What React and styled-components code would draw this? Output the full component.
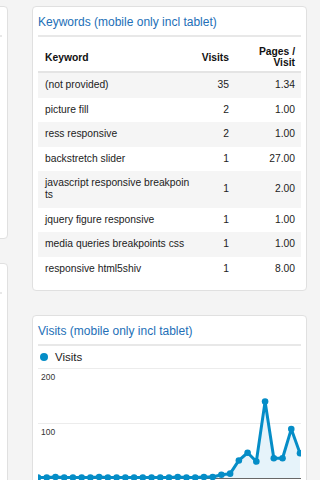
import React from "react";
import styled, { createGlobalStyle } from "styled-components";

const GlobalStyle = createGlobalStyle`
  html, body {
    margin: 0;
    padding: 0;
    overflow: hidden;
    background: #f4f4f4;
  }
  body {
    font-family: "Liberation Sans", Arial, Helvetica, sans-serif;
    color: #333;
  }
`;

const Page = styled.div`
  display: flex;
  gap: 24px;
  padding-top: 6px;
  margin-left: -252px;
`;

const Column = styled.div`
  display: flex;
  flex-direction: column;
  gap: ${(props) => props.gap}px;
  width: ${(props) => props.width}px;
  flex-shrink: 0;
`;

const Card = styled.section`
  background: #fff;
  border: 1px solid #e0e0e0;
  border-radius: 4px;
  padding: 0 5px 9px;
  height: ${(props) => (props.height ? `${props.height}px` : "auto")};
  box-sizing: border-box;
`;

const CardTitle = styled.h2`
  margin: 0;
  padding: 8px 0 6px;
  min-height: 14px;
  font-size: 12px;
  line-height: 14px;
  font-weight: normal;
  color: #236fb7;
  border-bottom: 2px solid #e8e8e8;
  white-space: nowrap;
`;

const Table = styled.table`
  width: 100%;
  table-layout: fixed;
  border-collapse: collapse;
  font-size: 10.3px;
`;

const HeadCell = styled.th`
  padding: 9px ${(props) => (props.align === "right" ? "6px" : "3px")} 3px 7px;
  line-height: 11px;
  font-weight: bold;
  color: #111;
  text-align: ${(props) => props.align || "left"};
  vertical-align: middle;
  border-bottom: 2px solid #e4e4e4;
`;

const Row = styled.tr`
  background: ${(props) => (props.striped ? "#f5f5f5" : "#fff")};
`;

const Cell = styled.td`
  padding: 6px ${(props) => (props.align === "right" ? "6px" : "3px")} 6.5px 7px;
  line-height: 12px;
  text-align: ${(props) => props.align || "left"};
  vertical-align: middle;
  word-break: break-all;
  color: #222;
`;

const Legend = styled.div`
  display: flex;
  align-items: center;
  gap: 7px;
  height: 22px;
  padding-left: 2px;
  font-size: 11.5px;
  color: #222;
`;

const Dot = styled.span`
  width: 8px;
  height: 8px;
  border-radius: 50%;
  background: #058dc7;
`;

const ChartSvg = styled.svg`
  display: block;
  width: 100%;
  height: 130px;
  overflow: hidden;
`;

const keywords = [
  ["(not provided)", 35, "1.34"],
  ["picture fill", 2, "1.00"],
  ["ress responsive", 2, "1.00"],
  ["backstretch slider", 1, "27.00"],
  ["javascript responsive breakpoints", 1, "2.00"],
  ["jquery figure responsive", 1, "1.00"],
  ["media queries breakpoints css", 1, "1.00"],
  ["responsive html5shiv", 1, "8.00"],
];

// daily visits for the month
const visits = [
  0, 0, 1, 0, 0, 0, 0, 1, 0, 0, 0, 0, 0, 0, 0, 0, 1, 0, 0, 1, 1, 5, 7, 31, 45,
  29, 138, 35, 35, 88, 44,
];

const CHART_W = 263;
const BASE = 109.5;
const px = (i) => (i * CHART_W) / (visits.length - 1);
const py = (v) => BASE - v * 0.55;

const VisitsChart = () => {
  const line = visits.map((v, i) => `${i ? "L" : "M"}${px(i)},${py(v)}`).join(" ");
  const area = `${line} L${px(visits.length - 1)},${BASE + 1} L0,${BASE + 1} Z`;
  return (
    <ChartSvg viewBox="0 0 264 130" preserveAspectRatio="none">
      <line x1="0" x2="264" y1="0.5" y2="0.5" stroke="#ececec" />
      <line x1="0" x2="264" y1="55.5" y2="55.5" stroke="#ececec" />
      <text x="3" y="12" fontSize="8.5" fill="#333" fontFamily="Liberation Sans, Arial, sans-serif">
        200
      </text>
      <text x="3" y="67" fontSize="8.5" fill="#333" fontFamily="Liberation Sans, Arial, sans-serif">
        100
      </text>
      <path d={area} fill="#e6f3fa" />
      <line x1="0" x2="264" y1="110.5" y2="110.5" stroke="#666" />
      <path d={line} fill="none" stroke="#058dc7" strokeWidth="3" strokeLinejoin="round" />
      {visits.map((v, i) => (
        <circle key={i} cx={px(i)} cy={py(v)} r="3.3" fill="#058dc7" />
      ))}
    </ChartSvg>
  );
};

const App = () => (
  <>
    <GlobalStyle />
    <Page>
      <Column width={260} gap={24}>
        <Card height={233}>
          <CardTitle />
        </Card>
        <Card height={400}>
          <CardTitle />
        </Card>
      </Column>
      <Column width={275} gap={24}>
        <Card>
          <CardTitle>Keywords (mobile only incl tablet)</CardTitle>
          <Table>
            <colgroup>
              <col style={{ width: 156 }} />
              <col style={{ width: 41 }} />
              <col style={{ width: 66 }} />
            </colgroup>
            <thead>
              <tr>
                <HeadCell>Keyword</HeadCell>
                <HeadCell align="right">Visits</HeadCell>
                <HeadCell align="right">
                  Pages /<br />
                  Visit
                </HeadCell>
              </tr>
            </thead>
            <tbody>
              {keywords.map(([kw, v, pages], i) => (
                <Row key={kw} striped={i % 2 === 0}>
                  <Cell>{kw}</Cell>
                  <Cell align="right">{v}</Cell>
                  <Cell align="right">{pages}</Cell>
                </Row>
              ))}
            </tbody>
          </Table>
        </Card>
        <Card>
          <CardTitle>Visits (mobile only incl tablet)</CardTitle>
          <Legend>
            <Dot />
            Visits
          </Legend>
          <VisitsChart />
        </Card>
      </Column>
    </Page>
  </>
);

export default App;
